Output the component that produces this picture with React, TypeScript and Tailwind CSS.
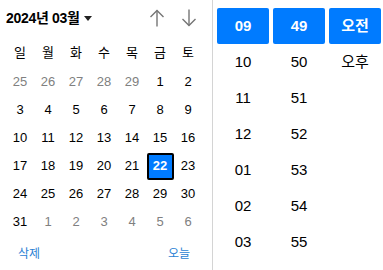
import React from "react";

const weeks: { d: number; out?: boolean; sel?: boolean }[][] = [
  [{ d: 25, out: true }, { d: 26, out: true }, { d: 27, out: true }, { d: 28, out: true }, { d: 29, out: true }, { d: 1 }, { d: 2 }],
  [{ d: 3 }, { d: 4 }, { d: 5 }, { d: 6 }, { d: 7 }, { d: 8 }, { d: 9 }],
  [{ d: 10 }, { d: 11 }, { d: 12 }, { d: 13 }, { d: 14 }, { d: 15 }, { d: 16 }],
  [{ d: 17 }, { d: 18 }, { d: 19 }, { d: 20 }, { d: 21 }, { d: 22, sel: true }, { d: 23 }],
  [{ d: 24 }, { d: 25 }, { d: 26 }, { d: 27 }, { d: 28 }, { d: 29 }, { d: 30 }],
  [{ d: 31 }, { d: 1, out: true }, { d: 2, out: true }, { d: 3, out: true }, { d: 4, out: true }, { d: 5, out: true }, { d: 6, out: true }],
];

const days = ["일", "월", "화", "수", "목", "금", "토"];
const hours = ["10", "11", "12", "01", "02", "03"];
const mins = ["50", "51", "52", "53", "54", "55"];

function Arrow({ up }: { up?: boolean }) {
  return (
    <svg width="18" height="18" viewBox="0 0 18 18" fill="none" stroke="#757575" strokeWidth="1.4">
      {up ? (
        <>
          <path d="M9 1.5v16" />
          <path d="M2.5 8L9 1.5 15.5 8" />
        </>
      ) : (
        <>
          <path d="M9 0.5v16" />
          <path d="M2.5 10L9 16.5 15.5 10" />
        </>
      )}
    </svg>
  );
}

export default function App() {
  return (
    <div
      className="flex h-[270px] w-[383px] overflow-hidden bg-white text-black"
      style={{ fontFamily: '"Liberation Sans", "Noto Sans CJK KR", sans-serif' }}
    >
      <div className="flex w-[212px] flex-col pl-[6px] pr-[10px]">
        <div className="flex h-[36px] items-center">
          <span className="text-[14px] font-bold tracking-[-0.3px]">2024년 03월</span>
          <svg width="8" height="5" viewBox="0 0 8 5" className="ml-[4px] mt-[1px]">
            <path d="M0 0h8L4 5z" fill="#222" />
          </svg>
          <div className="ml-auto flex items-center gap-[14px] pr-[4px]">
            <Arrow up />
            <Arrow />
          </div>
        </div>
        <div className="grid h-[30px] grid-cols-7 items-center pt-[3px]">
          {days.map((d) => (
            <div key={d} className="text-center text-[13px]">
              {d}
            </div>
          ))}
        </div>
        <div className="mt-[2px] grid grid-cols-7">
          {weeks.flat().map((c, i) => (
            <div key={i} className="flex h-[28px] items-center justify-center">
              {c.sel ? (
                <div className="flex h-[27px] w-[27px] items-center justify-center rounded-[2px] border-2 border-black bg-[#007bff] text-[13px] font-bold text-white">
                  {c.d}
                </div>
              ) : (
                <span className={`text-[13px] ${c.out ? "text-[#808080]" : "text-black"}`}>{c.d}</span>
              )}
            </div>
          ))}
        </div>
        <div className="mt-[9px] flex items-center justify-between px-[12px] text-[12px] text-[#2a7fd4]">
          <span>삭제</span>
          <span>오늘</span>
        </div>
      </div>
      <div className="w-px bg-[#d4d4d4]" />
      <div className="flex flex-col pl-[4px] pt-[8px]">
        <div className="flex gap-[4px]">
          {["09", "49", "오전"].map((t) => (
            <div
              key={t}
              className="flex h-[36px] w-[52px] items-center justify-center rounded-[2px] bg-[#007bff] text-[15px] font-bold text-white"
            >
              {t}
            </div>
          ))}
        </div>
        {hours.map((h, i) => (
          <div key={h} className="flex gap-[4px]">
            <div className="flex h-[36px] w-[52px] items-center justify-center text-[15px]">{h}</div>
            <div className="flex h-[36px] w-[52px] items-center justify-center text-[15px]">{mins[i]}</div>
            <div className="flex h-[36px] w-[52px] items-center justify-center text-[15px]">{i === 0 ? "오후" : ""}</div>
          </div>
        ))}
      </div>
    </div>
  );
}
